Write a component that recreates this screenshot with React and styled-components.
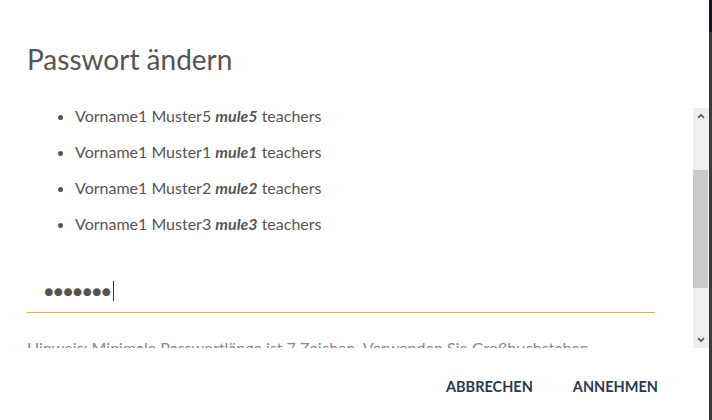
import React, { useLayoutEffect, useRef, useState } from "react";
import styled, { createGlobalStyle } from "styled-components";

const GlobalStyle = createGlobalStyle`
  html, body {
    margin: 0;
    padding: 0;
    height: 420px;
    overflow: hidden;
    background: linear-gradient(#111418 0 32px, #3a3a3a 32px);
    font-family: Lato, "Liberation Sans", sans-serif;
  }
`;

const users = [
  { first: "Vorname1", last: "Muster4", login: "mule4" },
  { first: "Vorname1", last: "Muster5", login: "mule5" },
  { first: "Vorname1", last: "Muster1", login: "mule1" },
  { first: "Vorname1", last: "Muster2", login: "mule2" },
  { first: "Vorname1", last: "Muster3", login: "mule3" },
];

const Chevron = ({ down }) => (
  <svg width="8" height="6" viewBox="0 0 8 6">
    <path
      d={down ? "M1 1.2 L4 4.2 L7 1.2" : "M1 4.8 L4 1.8 L7 4.8"}
      fill="none"
      stroke="#5f5f5f"
      strokeWidth="1.8"
    />
  </svg>
);

const App = () => {
  const viewRef = useRef(null);
  const anchorRef = useRef(null);
  const trackRef = useRef(null);
  const [thumb, setThumb] = useState({ top: 0, height: 0 });

  useLayoutEffect(() => {
    const view = viewRef.current;
    if (!view || !anchorRef.current || !trackRef.current) return;
    view.scrollTop = anchorRef.current.offsetTop;
    const trackH = trackRef.current.clientHeight;
    setThumb({
      top: (trackH * view.scrollTop) / view.scrollHeight,
      height: (trackH * view.clientHeight) / view.scrollHeight,
    });
  }, []);

  return (
    <>
      <GlobalStyle />
      <Dialog>
        <Title>Passwort ändern</Title>
        <ScrollArea>
          <Viewport ref={viewRef}>
            <Intro>Das Passwort wird für folgende Benutzer geändert:</Intro>
            <UserList>
              {users.map((u, i) => (
                <UserItem key={u.login} ref={i === 1 ? anchorRef : null}>
                  {u.first} {u.last} <b>{u.login}</b> teachers
                </UserItem>
              ))}
            </UserList>
            <Field>
              <Dots>●●●●●●●</Dots>
              <Caret />
            </Field>
            <Hint>
              Hinweis: Minimale Passwortlänge ist 7 Zeichen. Verwenden Sie Großbuchstaben,
              Kleinbuchstaben, Zahlen und Sonderzeichen für ein sicheres Passwort.
            </Hint>
          </Viewport>
          <Scrollbar>
            <ScrollButton>
              <Chevron />
            </ScrollButton>
            <Track ref={trackRef}>
              <Thumb style={{ marginTop: thumb.top, height: thumb.height }} />
            </Track>
            <ScrollButton>
              <Chevron down />
            </ScrollButton>
          </Scrollbar>
        </ScrollArea>
        <Actions>
          <TextButton>Abbrechen</TextButton>
          <TextButton>Annehmen</TextButton>
        </Actions>
      </Dialog>
    </>
  );
};

const Dialog = styled.div`
  width: 709px;
  height: 420px;
  background: #fff;
  display: flex;
  flex-direction: column;
`;

const Title = styled.h2`
  flex: none;
  margin: 0;
  padding: 41px 27px 0;
  height: 108px;
  box-sizing: border-box;
  font-size: 28px;
  font-weight: 400;
  line-height: 36px;
  color: #555;
`;

const ScrollArea = styled.div`
  flex: none;
  display: flex;
  height: 240px;
`;

const Viewport = styled.div`
  position: relative;
  flex: 1;
  overflow: hidden;
  padding: 0 38px 0 27px;
  color: #555;
`;

const Scrollbar = styled.div`
  flex: none;
  width: 16px;
  display: flex;
  flex-direction: column;
  background: #efefef;
`;

const ScrollButton = styled.div`
  flex: none;
  height: 16px;
  display: flex;
  align-items: center;
  justify-content: center;
`;

const Track = styled.div`
  flex: 1;
  display: flex;
  flex-direction: column;
`;

const Thumb = styled.div`
  width: 15px;
  background: #c9c9c9;
`;

const Intro = styled.p`
  margin: 20px 0 12px;
  font-size: 16px;
  line-height: 24px;
`;

const UserList = styled.ul`
  margin: 0;
  padding-left: 48px;
  list-style: disc;
`;

const UserItem = styled.li`
  font-size: 16px;
  line-height: 16px;
  margin-bottom: 20px;

  b {
    font-weight: 700;
    font-style: italic;
  }
`;

const Field = styled.div`
  display: flex;
  align-items: center;
  margin-top: 41px;
  height: 40px;
  box-sizing: border-box;
  padding: 0 0 4px 17px;
  border-bottom: 1px solid #ffa629;
`;

const Dots = styled.span`
  font-size: 16px;
  color: #555;
`;

const Caret = styled.span`
  width: 1px;
  height: 20px;
  margin-left: 2px;
  background: #333;
`;

const Hint = styled.p`
  margin: 24px 0 55px;
  font-size: 16px;
  line-height: 22px;
  color: #888;
`;

const Actions = styled.div`
  flex: 1;
  display: flex;
  justify-content: flex-end;
  align-items: center;
  gap: 40px;
  padding: 4px 51px 0 0;
`;

const TextButton = styled.button`
  border: none;
  background: none;
  padding: 0;
  font-family: Lato, "Liberation Sans", sans-serif;
  font-size: 14.5px;
  font-weight: 700;
  text-transform: uppercase;
  color: #2b3a4a;
  cursor: pointer;
`;

export default App;
